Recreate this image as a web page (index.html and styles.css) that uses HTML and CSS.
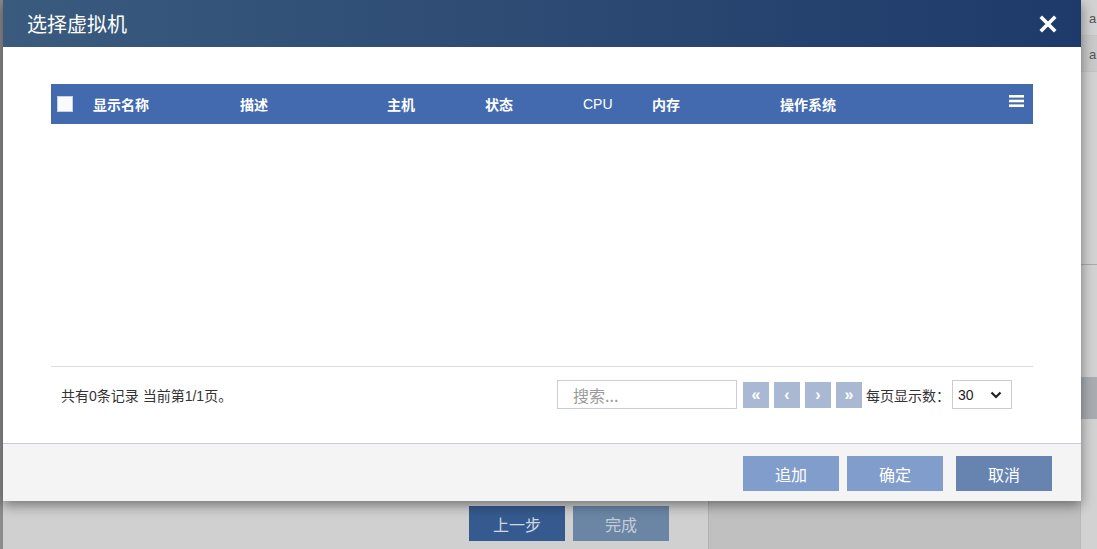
FILE: index.html
```html
<!DOCTYPE html>
<html lang="zh-CN">
<head>
  <meta charset="UTF-8">
  <title>选择虚拟机</title>
  <link rel="stylesheet" href="styles.css">
</head>
<body>

  <div class="page">
    <div class="rail"></div>
    <div class="work">
      <div class="steps">
        <button class="step-btn prev">上一步</button>
        <button class="step-btn done">完成</button>
      </div>
    </div>
    <div class="panel"></div>
    <div class="list">
      <div class="list-row">a</div>
      <div class="list-row alt">a</div>
      <div class="list-gap"></div>
      <div class="list-band"></div>
    </div>
  </div>

  <div class="modal">
    <div class="modal-header">
      <span class="modal-title">选择虚拟机</span>
      <svg class="close-icon" width="18" height="18" viewBox="0 0 18 18">
        <path d="M3 3 L15 15 M15 3 L3 15" stroke="#fff" stroke-width="3.6" stroke-linecap="square"/>
      </svg>
    </div>

    <div class="modal-body">
      <div class="grid-head">
        <div class="cell check"><span class="checkbox"></span></div>
        <div class="cell c-name">显示名称</div>
        <div class="cell c-desc">描述</div>
        <div class="cell c-host">主机</div>
        <div class="cell c-state">状态</div>
        <div class="cell c-cpu">CPU</div>
        <div class="cell c-mem">内存</div>
        <div class="cell c-os">操作系统</div>
        <div class="cell c-menu">
          <svg width="15" height="12" viewBox="0 0 15 12">
            <rect x="0" y="0" width="15" height="2.6" fill="#fff"/>
            <rect x="0" y="4.7" width="15" height="2.6" fill="#fff"/>
            <rect x="0" y="9.4" width="15" height="2.6" fill="#fff"/>
          </svg>
        </div>
      </div>
      <div class="grid-rows"></div>

      <div class="pager">
        <div class="pager-info">共有0条记录 当前第1/1页。</div>
        <div class="pager-tools">
          <input class="search" type="text" placeholder="搜索...">
          <button class="page-btn">&laquo;</button>
          <button class="page-btn">&lsaquo;</button>
          <button class="page-btn">&rsaquo;</button>
          <button class="page-btn">&raquo;</button>
          <span class="page-size-label">每页显示数：</span>
          <div class="page-size">
            <span>30</span>
            <svg width="12" height="8" viewBox="0 0 12 8">
              <path d="M1.5 1.5 L6 6 L10.5 1.5" fill="none" stroke="#222" stroke-width="2.2"/>
            </svg>
          </div>
        </div>
      </div>
    </div>

    <div class="modal-footer">
      <button class="foot-btn add">追加</button>
      <button class="foot-btn ok">确定</button>
      <button class="foot-btn cancel">取消</button>
    </div>
  </div>

</body>
</html>
```

FILE: styles.css
```css
* {
  box-sizing: border-box;
  margin: 0;
  padding: 0;
}
body {
  width: 1097px;
  height: 549px;
  overflow: hidden;
  position: relative;
  background: #d0d0d0;
  font-family: "Liberation Sans", "Noto Sans CJK SC", sans-serif;
}
button {
  border: none;
  font-family: inherit;
  cursor: pointer;
}

/* page underneath the dialog */
.page {
  display: flex;
  height: 549px;
}
.rail {
  width: 3px;
  background: #8c8c8c;
}
.work {
  width: 705px;
  background: #d0d0d0;
  display: flex;
  flex-direction: column;
  justify-content: flex-end;
}
.steps {
  display: flex;
  gap: 8px;
  padding: 0 0 8px 466px;
}
.step-btn {
  width: 96px;
  height: 35px;
  font-size: 16px;
  color: #d2d8e2;
}
.step-btn.prev {
  background: #355a8f;
}
.step-btn.done {
  background: #6b86a5;
  color: #c4ccd8;
}
.panel {
  width: 373px;
  background: #c0c0c0;
  border-left: 1px solid #b2b2b2;
  border-right: 1px solid #b8b8b8;
}
.list {
  width: 16px;
  background: #d2d2d2;
  display: flex;
  flex-direction: column;
}
.list-row {
  height: 36px;
  line-height: 38px;
  padding-left: 8px;
  font-size: 13px;
  color: #555;
  border-bottom: 1px solid #c4c4c4;
  overflow: hidden;
}
.list-row.alt {
  background: #c9c9c9;
}
.list-gap {
  height: 193px;
  border-bottom: 1px solid #aaa;
}
.list-band {
  height: 42px;
  margin-top: 112px;
  background: #a9adb2;
}

/* dialog */
.modal {
  position: absolute;
  left: 3px;
  top: 0;
  width: 1078px;
  height: 501px;
  background: #fff;
  display: flex;
  flex-direction: column;
  box-shadow: 0 4px 12px rgba(0, 0, 0, 0.45);
}
.modal-header {
  height: 47px;
  padding: 0 24px;
  display: flex;
  align-items: center;
  justify-content: space-between;
  background: linear-gradient(to right, #3a5a7e, #2e4c74 45%, #1e3a6a);
}
.modal-title {
  font-size: 20px;
  color: #fff;
  font-family: "Noto Sans CJK SC", sans-serif;
}
.close-icon {
  display: block;
}
.modal-body {
  flex: 1;
  padding: 37px 48px 0;
  display: flex;
  flex-direction: column;
}
.grid-head {
  height: 40px;
  background: #436aaf;
  display: flex;
  align-items: center;
  color: #fff;
  font-size: 14px;
  font-weight: bold;
}
.cell {
  padding-left: 8px;
  white-space: nowrap;
}
.check {
  width: 34px;
  padding-left: 6px;
  display: flex;
}
.checkbox {
  width: 16px;
  height: 16px;
  background: #fafafa;
  border: 1px solid #c8d0e0;
}
.c-name, .c-desc {
  width: 147px;
}
.c-host, .c-state {
  width: 98px;
}
.c-cpu {
  width: 69px;
  font-weight: normal;
}
.c-mem {
  width: 128px;
}
.c-os {
  flex: 1;
}
.c-menu {
  padding: 0 9px 6px 0;
  display: flex;
}
.grid-rows {
  height: 243px;
  border-bottom: 1px solid #dcdcdc;
}
.pager {
  flex: 1;
  display: flex;
  align-items: center;
  justify-content: space-between;
  padding: 0 21px 21px 10px;
}
.pager-info {
  font-size: 14px;
  color: #333;
}
.pager-tools {
  display: flex;
  align-items: center;
}
.search {
  width: 180px;
  height: 29px;
  border: 1px solid #ccccd8;
  padding-left: 15px;
  font-size: 16px;
  font-family: "Noto Sans CJK SC", sans-serif;
  margin-right: 6px;
  outline: none;
}
.search::placeholder {
  color: #9a9a9a;
}
.page-btn {
  width: 26px;
  height: 26px;
  background: #a9b9d3;
  color: #fff;
  font-size: 16px;
  font-weight: bold;
  margin-right: 5px;
}
.page-size-label {
  font-size: 14px;
  color: #333;
  font-family: "Noto Sans CJK SC", sans-serif;
  margin-left: -1px;
  padding-right: 2px;
}
.page-size {
  width: 60px;
  height: 29px;
  border: 1px solid #ccc;
  display: flex;
  align-items: center;
  justify-content: space-between;
  padding: 0 9px 0 5px;
  font-size: 14px;
  color: #222;
}
.modal-footer {
  height: 58px;
  background: #f4f4f4;
  border-top: 1px solid #c9c9dc;
  display: flex;
  justify-content: flex-end;
  align-items: flex-start;
  padding: 12px 29px 0 0;
  gap: 8px;
}
.foot-btn {
  width: 96px;
  height: 35px;
  font-size: 16px;
  color: #fff;
  background: #819dcb;
  font-family: "Noto Sans CJK SC", sans-serif;
}
.foot-btn.cancel {
  background: #6783b0;
  margin-left: 5px;
}
```
